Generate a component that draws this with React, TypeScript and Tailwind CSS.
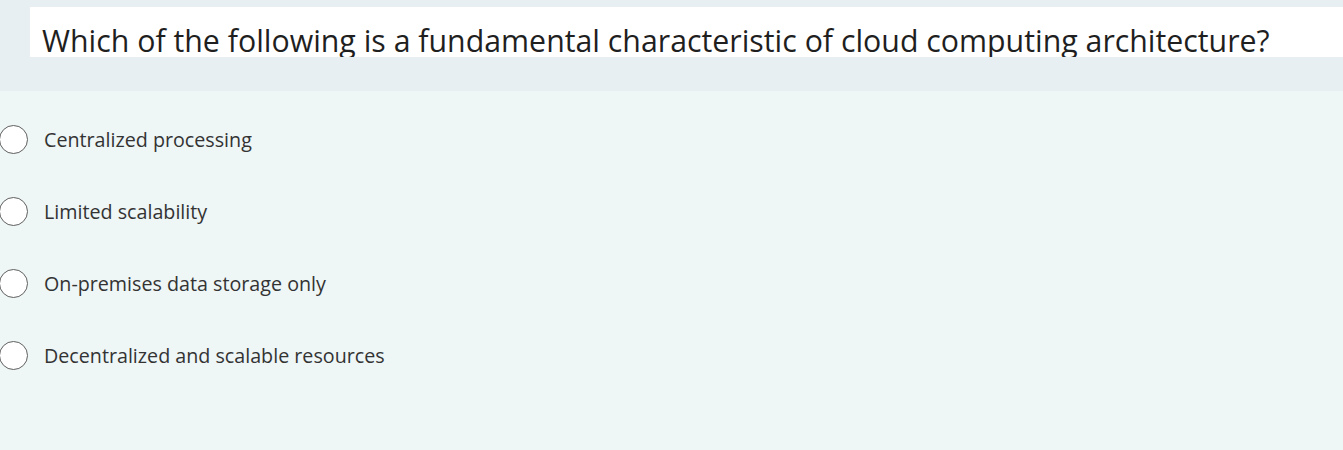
const OPTIONS = [
  "Centralized processing",
  "Limited scalability",
  "On-premises data storage only",
  "Decentralized and scalable resources",
];

export default function App() {
  return (
    <div
      className="w-[1343px] h-[450px] overflow-hidden bg-[#eef6f6] text-[#262626]"
      style={{ fontFamily: '"Open Sans", "Noto Sans", sans-serif' }}
    >
      {/* question header */}
      <div className="h-[91px] bg-[#e7eff3] pt-[7px] pl-[30px]">
        <div className="h-[50px] bg-white pl-[12px] pt-[19px] overflow-hidden">
          <h1 className="text-[30.3px] leading-[30px] text-[#1f1f1f] whitespace-nowrap">
            Which of the following is a fundamental characteristic of cloud computing architecture?
          </h1>
        </div>
      </div>

      {/* choices */}
      <div className="pt-[34px] flex flex-col gap-[43px]">
        {OPTIONS.map((opt) => (
          <label key={opt} className="flex items-center h-[29px] -ml-[1px]">
            <span className="w-[29px] h-[29px] rounded-full border-[1.5px] border-[#5f5f5f] bg-white shrink-0" />
            <span className="ml-[16px] text-[19.7px] text-[#333]">{opt}</span>
          </label>
        ))}
      </div>
    </div>
  );
}
